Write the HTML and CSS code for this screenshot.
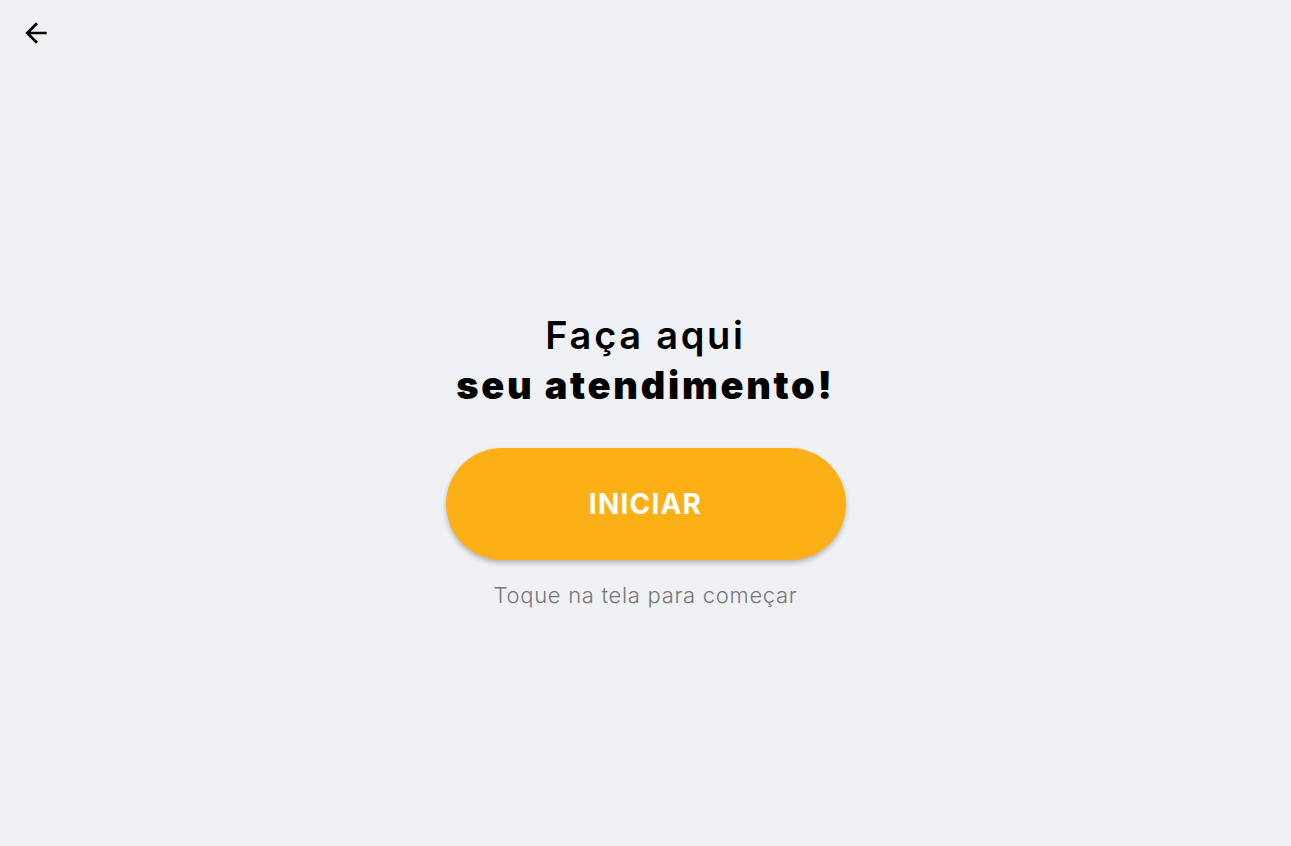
FILE: index.html
```html
<!DOCTYPE html>
<html lang="pt-BR">
<head>
<meta charset="utf-8">
<title>Atendimento</title>
<link rel="stylesheet" href="styles.css">
</head>
<body>
<div class="page">
  <header class="topbar">
    <button class="back" aria-label="Voltar">
      <svg viewBox="0 0 24 24" width="32" height="32"><path d="M20 11H7.83l5.59-5.59L12 4l-8 8 8 8 1.41-1.41L7.83 13H20v-2z" fill="#000"/></svg>
    </button>
  </header>
  <main class="center">
    <h1 class="title"><span class="line1">Faça aqui</span><span class="line2">seu atendimento!</span></h1>
    <button class="start">INICIAR</button>
    <p class="hint">Toque na tela para começar</p>
  </main>
</div>
</body>
</html>
```
FILE: styles.css
```css
html, body {
  margin: 0;
  height: 100%;
}
body {
  background: #f0f1f5;
  font-family: "Inter", "Open Sans", sans-serif;
  color: #000;
}
.page {
  height: 100%;
  display: flex;
  flex-direction: column;
}
.topbar {
  height: 64px;
  display: flex;
  align-items: center;
  padding-left: 20px;
  padding-top: 1px;
}
.back {
  border: 0;
  background: none;
  padding: 0;
  width: 32px;
  height: 32px;
  display: flex;
}
.center {
  flex: 1;
  display: flex;
  flex-direction: column;
  align-items: center;
  justify-content: center;
  padding-top: 8px;
}
.title {
  margin: 0;
  display: flex;
  flex-direction: column;
  align-items: center;
  font-size: 38px;
  line-height: 50px;
  letter-spacing: 2.7px;
}
.line1 { font-weight: 600; }
.line2 { font-weight: 900; }
.start {
  margin-top: 38px;
  width: 400px;
  height: 112px;
  border: 0;
  border-radius: 56px;
  background: #fdb016;
  color: #fff;
  font-family: inherit;
  font-weight: 700;
  font-size: 28px;
  letter-spacing: 1.2px;
  box-shadow: 0 3px 5px rgba(0,0,0,0.25);
}
.hint {
  margin: 20px 0 0;
  font-size: 22px;
  font-weight: 300;
  letter-spacing: 0.7px;
  color: #777;
  line-height: 30px;
}
```
